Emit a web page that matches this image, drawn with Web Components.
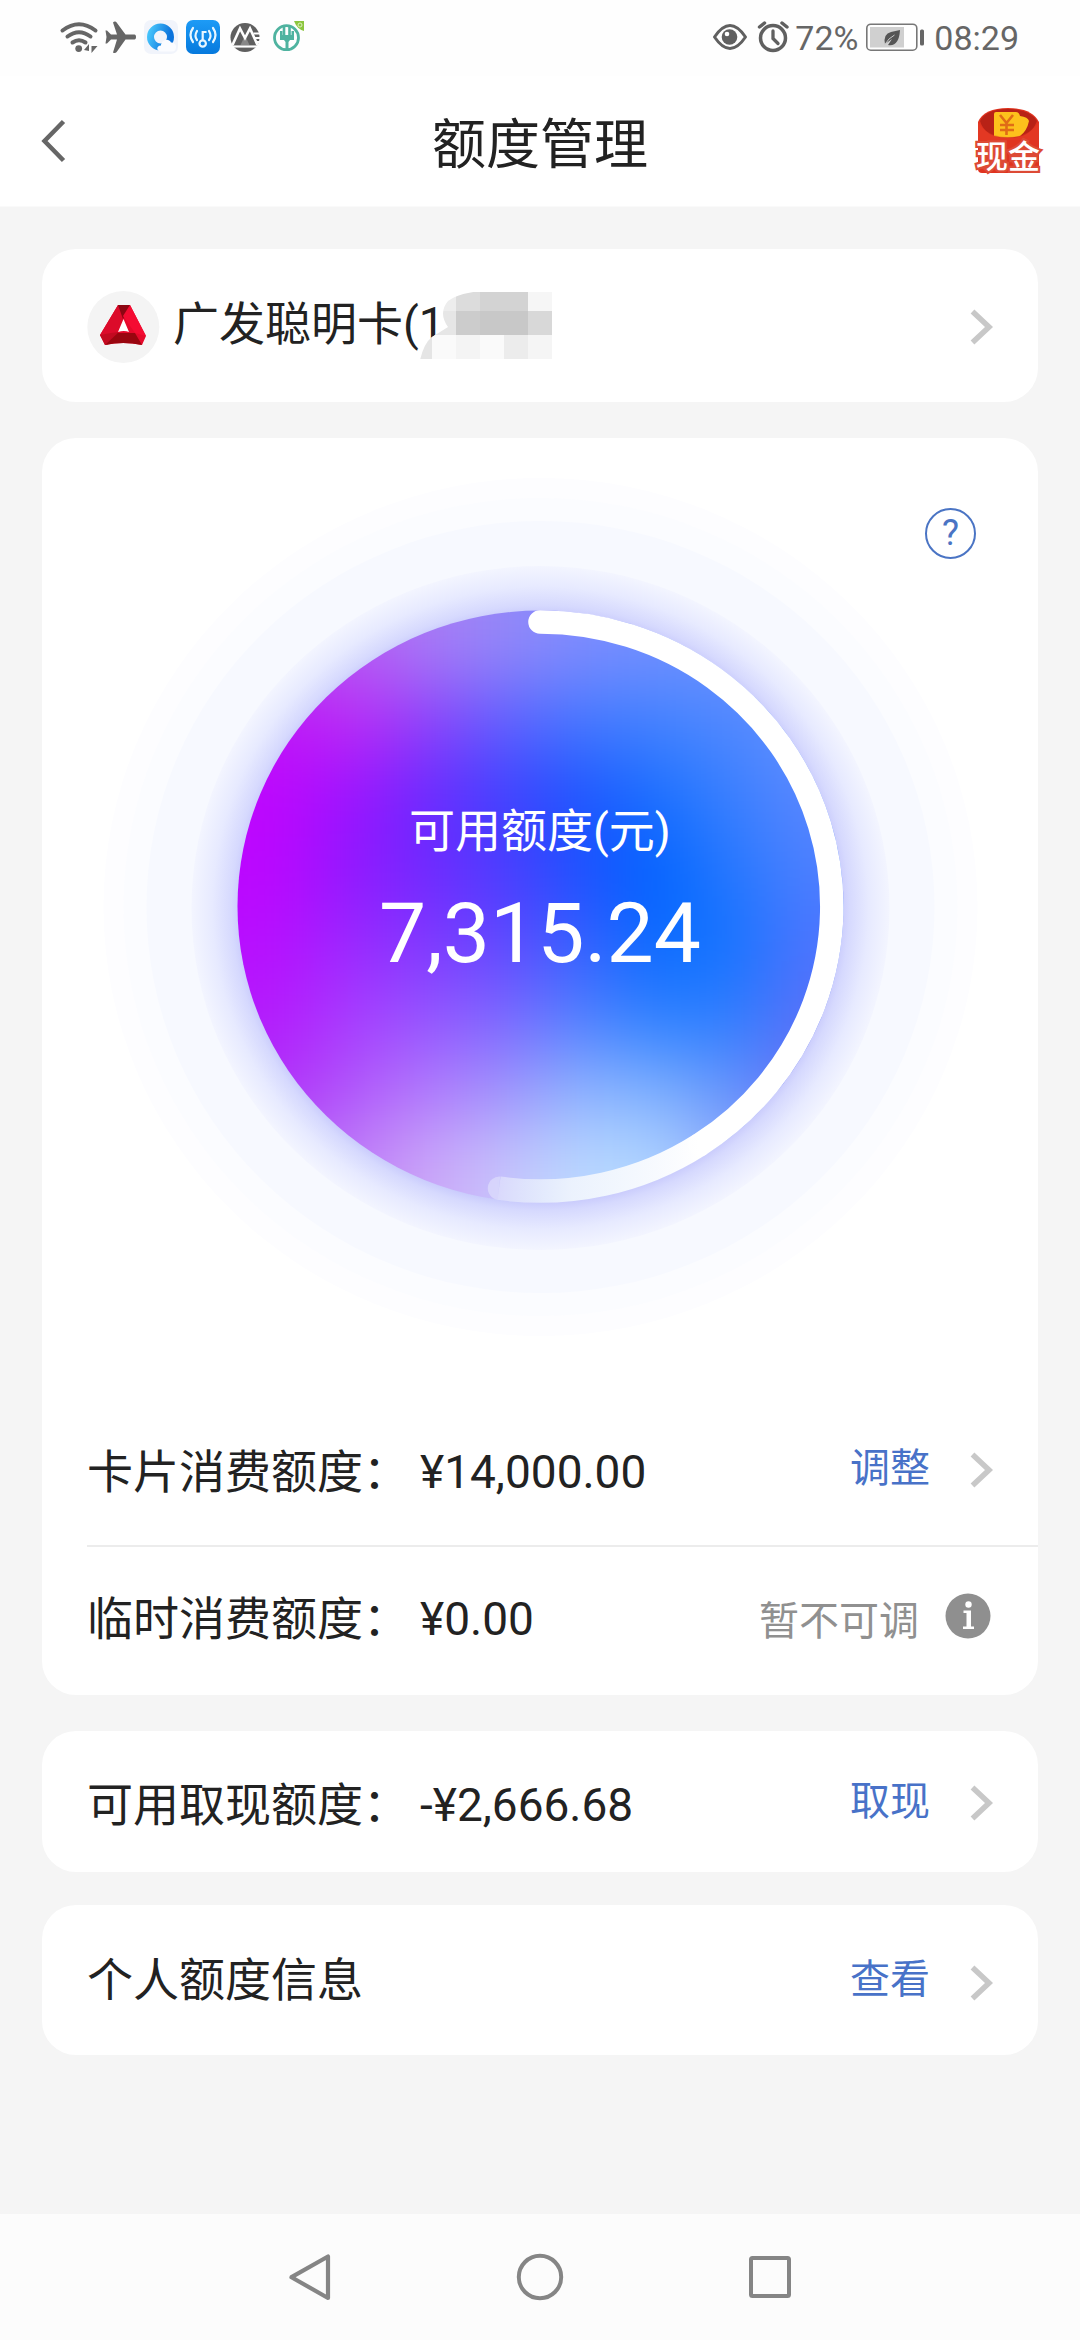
<!DOCTYPE html>
<html lang="zh-CN">
<head>
<meta charset="utf-8">
<title>额度管理</title>
<style>
  html, body { margin: 0; padding: 0; background: #f5f5f5; }
  body { width: 1080px; height: 2340px; overflow: hidden; font-family: Roboto, "Noto Sans CJK SC", sans-serif; color: #222; }
</style>
</head>
<body>
<quota-app></quota-app>
<script>
const define = (name, html) => customElements.define(name, class extends HTMLElement {
  constructor() {
    super();
    const t = document.createElement('template');
    t.innerHTML = html;
    this.attachShadow({ mode: 'open' }).append(t.content.cloneNode(true));
  }
});

define('status-bar', `
<style>
  :host { display: flex; justify-content: space-between; align-items: flex-start; height: 76px; background: #fefefe; color: #666; font-size: 34px; line-height: 76px; }
  svg { display: block; }
  .right { display: flex; padding-right: 61px; }
  .pct { width: 71px; padding-left: 4px; }
  .time { padding-left: 8px; }
</style>
<svg width="320" height="76" viewBox="0 0 320 76">
  <g fill="none" stroke="#666" stroke-width="4" stroke-linecap="round">
    <path d="M62.500 30.500Q79 18 95.500 30.500"/><path d="M67.500 36.500Q79 28 90.500 36.500"/><path d="M72.500 42.500Q79 38 85.500 42.500"/>
  </g>
  <circle cx="78.700" cy="48.600" r="3.400" fill="#666"/>
  <path d="M84 50l5-6v7zM91.500 46v7l6-7z" fill="#666"/>
  <path d="M113 22.500c1.500-1.500 3-1 4 .5l8.500 11.500h9c2 0 2 5 0 5h-9L117 51.500c-1 1.500-2.500 2-4 1L117 39.500h-6l-4 4h-1.500l1-6.500-1-6.500h1.500l4 4h6z" fill="#666"/>
  <defs>
    <linearGradient id="q" x1="0" y1="0" x2="1" y2="0.300"><stop offset="0" stop-color="#45c3fb"/><stop offset="1" stop-color="#0c74dc"/></linearGradient>
    <linearGradient id="b" x1="0" y1="0" x2="0" y2="1"><stop offset="0" stop-color="#1d9bf6"/><stop offset="1" stop-color="#0679dd"/></linearGradient>
  </defs>
  <rect x="144" y="20" width="34" height="34" rx="7" fill="#f1f4fb"/>
  <circle cx="160.500" cy="37" r="10" fill="none" stroke="url(#q)" stroke-width="7"/>
  <path d="M161 51.500c-5 0-5-6 0-6 0-6 8-8 10-3 6-1 7 9 1 9z" fill="#fbfcff"/>
  <rect x="186" y="20" width="34" height="34" rx="7" fill="url(#b)"/>
  <g fill="none" stroke="#e8f6ff" stroke-width="2.200" stroke-linecap="round">
    <circle cx="202.700" cy="43.500" r="3.200"/><path d="M202.700 40V32h3"/>
    <path d="M197 31q-3 5 0 9M193 28q-5 7 0 14M209 31q3 5 0 9M213 28q5 7 0 14"/>
  </g>
  <circle cx="245" cy="37.500" r="14.500" fill="#5f5f5f"/>
  <path d="M232.500 45L240 28.500 245 38 250 28.500 257.500 45" fill="none" stroke="#fefefe" stroke-width="2.600" stroke-linejoin="miter"/>
  <path d="M245 35.500L249.500 45h-9z" fill="#fefefe" opacity=".25"/>
  <path d="M232 46.500h28" stroke="#fefefe" stroke-width="2.200"/>
  <path d="M253.500 33.500h7M255 38h6M257 42h4" stroke="#fefefe" stroke-width="1.800"/>
  <circle cx="286.500" cy="37.700" r="12" fill="none" stroke="#4fb3a0" stroke-width="2.800"/>
  <path d="M284 25v10M289.500 25v10" stroke="#4fb3a0" stroke-width="2.600"/>
  <path d="M280 31v9h4l1.500 2v8h3v-8l1.500-2h4v-9h-2.500v4h-9v-4z" fill="#4fb3a0"/>
  <path d="M294 21h10v10q-7-2-10-10z" fill="#8cc63f"/><circle cx="300" cy="25" r="2" fill="none" stroke="#dff0bd"/>
</svg>
<div class="right">
  <svg width="80" height="76" viewBox="712 0 80 76">
    <path d="M715.500 37Q731 14 746.500 37Q731 60 715.500 37z" fill="none" stroke="#606060" stroke-width="3" stroke-linejoin="round"/>
    <circle cx="730.500" cy="37" r="7.800" fill="#606060"/><circle cx="728" cy="34" r="2.300" fill="#fff"/>
    <circle cx="774" cy="38" r="12.500" fill="none" stroke="#606060" stroke-width="3.500"/>
    <path d="M774 31v7.500l5 5" fill="none" stroke="#606060" stroke-width="3.300" stroke-linecap="round"/>
    <path d="M760.500 27l5-4M788 27l-5-4" stroke="#606060" stroke-width="3.500" stroke-linecap="round"/>
  </svg>
  <span class="pct">72%</span>
  <svg width="60" height="76" viewBox="867 0 60 76">
    <rect x="867.800" y="24.200" width="50" height="26" rx="4" fill="#fff" stroke="#777" stroke-width="1.600"/>
    <rect x="871" y="27" width="34" height="20.500" fill="#d0d0d0"/>
    <path d="M886 44q-2-10 6-12l9-2q-1 17-12 15l4-6z" fill="#555"/>
    <path d="M885.500 45q4-7 10-10" stroke="#c8c8c8" stroke-width="1" fill="none"/>
    <rect x="921" y="29.500" width="4" height="16" rx="1.500" fill="#666"/>
  </svg>
  <span class="time">08:29</span>
</div>`);

define('title-bar', `
<style>
  :host { display: grid; grid-template-columns: 200px 1fr 200px; height: 130px; background: #fff; border-bottom: 1px solid #fafafa; }
  .title { font-size: 54px; line-height: 139px; height: 130px; text-align: center; white-space: nowrap; }
  svg { display: block; }
  .cash { justify-self: end; }
</style>
<svg width="80" height="130" viewBox="0 76 80 130"><path d="M63.500 121.500L44.500 141 63.500 160.500" fill="none" stroke="#666" stroke-width="4.500"/></svg>
<div class="title"><slot></slot></div>
<svg class="cash" width="120" height="130" viewBox="960 76 120 130">
  <path d="M978 122q6-14 30-14t31 14v47q0 4-4 4h-53q-4 0-4-4z" fill="#e0331f"/>
  <path d="M980 121q6-12 28-12t29 12q-6 17-29 17t-28-17z" fill="#b82216"/>
  <path d="M994 114q0-2 2-2h20q3 0 4 4 8 1 9 5-2 10-9 15-12 3-26 0z" fill="#fdc11c"/>
  <path d="M1000 115l6.500 8 6.500-8M1000 125h14M1000 130h14M1006.500 123v12" fill="none" stroke="#e06c16" stroke-width="2.600"/>
  <path d="M978 122q9 15 30 15t31-15v18h-61z" fill="#e8412b" opacity=".35"/>
  <text x="1008" y="168" text-anchor="middle" font-family="Noto Sans CJK SC" font-weight="500" font-size="32" fill="#fff" stroke="#dd4a35" stroke-width="4.500" paint-order="stroke">现金</text>
</svg>`);

define('chevron-right', `
<style>:host { display: block; width: 24px; height: 36px; } svg { display: block; }</style>
<svg width="24" height="36" viewBox="0 0 24 36"><path d="M2.500 2.500L19 18 2.500 33.500" fill="none" stroke="#c8c8c8" stroke-width="5.500"/></svg>`);

define('panel-card', `
<style>:host { display: block; background: #fff; border-radius: 34px; overflow: hidden; }</style>
<slot></slot>`);

define('card-picker', `
<style>
  :host { display: flex; align-items: center; height: 153px; padding: 0 44px 0 45px; font-size: 46px; line-height: 60px; }
  svg { display: block; flex: none; }
  .logo { margin: 3px 13px 0 0; }
  .name { width: 243px; margin-top: -3px; white-space: nowrap; }
  .veil { position: relative; margin-top: 3px; }
  chevron-right { margin: 3px 0 0 auto; }
</style>
<svg class="logo" width="73" height="72" viewBox="87 291 73 72">
  <circle cx="123.300" cy="327" r="36" fill="#f4f4f4"/>
  <path d="M118 305h12l16 31-4 9q-19-4-37 0l-5-10z" fill="#e5092b"/>
  <path d="M118 305h12l-1 4-5 10-7 13-10 13-7-10z" fill="#dc0b2a"/>
  <path d="M118 305h12l-7 14z" fill="#8c0612"/>
  <path d="M111 333h24l7 12q-19-4-37 0z" fill="#99060f"/>
  <path d="M100 335l11-2 8-1-14 13z" fill="#c30a20"/>
  <path d="M130 305l16 31-11-3-12-17z" fill="#f40b32"/>
  <path d="M123.500 319l5.500 13q-5-2-11 0z" fill="#fff"/>
</svg>
<span class="name"><slot></slot></span>
<svg class="veil" width="240" height="110" viewBox="416 273 240 110">
  <defs><clipPath id="v"><path d="M420 361Q424 344 432 338L448 328Q438 314 448 302Q460 293 485 292H556V361z"/></clipPath></defs>
  <path d="M420 361Q424 344 432 338L448 328Q438 314 448 302Q460 293 485 292H600V380H470z" fill="#fff"/>
  <g clip-path="url(#v)" shape-rendering="crispEdges">
    <path fill="#ededed" d="M432 293h24v19h-24z"/><path fill="#dcdcdc" d="M456 293h24v19h-24z"/><path fill="#d3d3d3" d="M480 293h48v19h-48z"/><path fill="#f6f6f6" d="M528 293h24v19h-24z"/>
    <path fill="#e6e6e6" d="M432 312h24v24h-24z"/><path fill="#cccccc" d="M456 312h24v24h-24z"/><path fill="#c8c8c8" d="M480 312h48v24h-48z"/><path fill="#d8d8d8" d="M528 312h24v24h-24z"/>
    <path fill="#e5e5e5" d="M418 336h14v24h-14z"/><path fill="#fafafa" d="M432 336h24v24h-24z"/><path fill="#f4f4f4" d="M456 336h24v24h-24z"/><path fill="#fafafa" d="M480 336h24v24h-24z"/><path fill="#ececec" d="M504 336h24v24h-24z"/><path fill="#f5f5f5" d="M528 336h24v24h-24z"/>
  </g>
</svg>
<chevron-right></chevron-right>`);

// Colour field of the gauge disc on an 8 by 8 grid, from top left to bottom right.
const FIELD = [
  'a850f2 b85cf4 a87cf6 9488f8 7f8cff 7290ff 6a90ff 6a90ff',
  'c014f8 be2af4 9040fa 6060ff 4478ff 4282ff 5088ff 6090ff',
  'be06fe 9c12ff 6a2aff 4040ff 1c55ff 1a70ff 3a80ff 5a86ff',
  'bc06ff 9018ff 7028ff 4c3cff 1c50ff 0064ff 2678ff 4c80ff',
  'b80eff 9a28ff 8038ff 6048ff 3660ff 086aff 1474ff 4c74ff',
  'b41afc a83cff 9454ff 7c66ff 5080ff 2c80ff 2c7cff 5a70f8',
  'b030f8 b056fa b27afc a094fc 8eb4ff 80b0ff 6494fc 6a70f5',
  'b864f8 c080f8 cca8f8 c8c4fc bcdaff b4d8ff 94acfc 7c80f5'
];
const CW = 76, CH = 74, X0 = 237, Y0 = 610;
const cells = FIELD.map((row, r) => row.split(' ').map((c, k) => {
  const l = k === 0 ? 150 : 0, t = r === 0 ? 150 : 0;
  const w = CW + 1 + l + (k === 7 ? 150 : 0), h = CH + 1 + t + (r === 7 ? 150 : 0);
  return `<rect x="${X0 + k * CW - l}" y="${Y0 + r * CH - t}" width="${w}" height="${h}" fill="#${c}"/>`;
}).join('')).join('');

define('quota-gauge', `
<style>
  :host { display: grid; height: 960px; position: relative; }
  svg, .text { grid-area: 1 / 1; display: block; }
  .text { padding-top: 361px; text-align: center; color: #fff; position: relative; }
  .label { font-size: 46px; line-height: 64px; }
  .amount { font-size: 84px; line-height: 100px; margin-top: 21px; }
  .help { position: absolute; left: 883px; top: 70px; box-sizing: border-box; width: 51px; height: 51px; border: 2.500px solid #4a74c4; border-radius: 50%; color: #4a74c4; font-size: 36px; line-height: 46px; text-align: center; }
</style>
<svg width="996" height="960" viewBox="42 438 996 960">
  <defs>
    <clipPath id="disc"><ellipse cx="540.500" cy="906.500" rx="303" ry="296"/></clipPath>
    <filter id="soft" x="0" y="400" width="1080" height="1000" filterUnits="userSpaceOnUse" color-interpolation-filters="sRGB"><feGaussianBlur stdDeviation="36"/></filter>
    <radialGradient id="halo">
      <stop offset="0.840" stop-color="#bfc0fb"/><stop offset="0.885" stop-color="#d6d9fe"/><stop offset="0.940" stop-color="#e7eaff"/><stop offset="1" stop-color="#f3f5ff"/>
    </radialGradient>
    <linearGradient id="fade" gradientUnits="userSpaceOnUse" x1="486" y1="0" x2="700" y2="0">
      <stop offset="0" stop-color="#eef2fc" stop-opacity=".42"/><stop offset=".14" stop-color="#eef2fc" stop-opacity=".6"/><stop offset=".4" stop-color="#f2f6fd" stop-opacity=".88"/><stop offset="1" stop-color="#fff"/>
    </linearGradient>
  </defs>
  <ellipse cx="540.500" cy="907" rx="437" ry="429" fill="#fdfdff"/>
  <ellipse cx="540.500" cy="907" rx="417" ry="409" fill="#fbfcff"/>
  <ellipse cx="540.500" cy="907" rx="394" ry="386" fill="#f7f9ff"/>
  <ellipse cx="540.500" cy="908" rx="349" ry="342" fill="url(#halo)"/>
  <g clip-path="url(#disc)"><g filter="url(#soft)">${cells}</g></g>
  <g fill="none" stroke-width="23.500">
    <path d="M540 622A291.500 284.500 0 0 1 700 1144.500" stroke="#fff" stroke-linecap="round"/>
    <path d="M700 1144.500A291.500 284.500 0 0 1 499 1188.200" stroke="url(#fade)"/>
  </g>
  <path d="M500.300 1176.500A11.750 11.750 0 0 0 497.500 1199.800z" fill="#eef2fc" fill-opacity=".42"/>
</svg>
<div class="text"><div class="label"><slot></slot></div><div class="amount"><slot name="amount"></slot></div></div>
<div class="help">?</div>`);

define('quota-row', `
<style>
  :host { display: flex; align-items: center; height: var(--h, 148px); padding-left: 45px; padding-right: 44px; font-size: 46px; line-height: 60px; white-space: nowrap; }
  .label { min-width: 333px; transform: translateY(var(--dy, 0)); }
  .value { transform: translateY(var(--dy, 0)); }
  .action { margin-left: auto; font-size: 40px; color: #4872c8; display: flex; align-items: center; }
</style>
<span class="label"><slot></slot></span><span class="value"><slot name="value"></slot></span>
<span class="action"><slot name="action"></slot></span>
<slot name="end"></slot>`);

define('info-dot', `
<style>:host { display: block; } svg { display: block; }</style>
<svg width="46" height="46" viewBox="0 0 46 46"><circle cx="23" cy="23" r="22.500" fill="#8f8f8f"/><circle cx="23.500" cy="11.500" r="3.200" fill="#fff"/><path d="M18.500 17.500h7.500v16h3v2.500h-11v-2.500h3.500V20h-3z" fill="#fff"/></svg>`);

define('nav-bar', `
<style>:host { display: flex; justify-content: space-between; align-items: center; height: 126px; padding: 0 287px; background: #fcfcfc; } svg { display: block; }</style>
<svg width="46" height="50" viewBox="286 2252 46 50"><path d="M327 2256.500v41.500L290.500 2277.200z" fill="none" stroke="#858585" stroke-width="4.200" stroke-linejoin="round"/></svg>
<svg width="50" height="50" viewBox="0 0 50 50"><circle cx="25" cy="25" r="21.200" fill="none" stroke="#858585" stroke-width="4"/></svg>
<svg width="46" height="50" viewBox="746 2252 46 50"><rect x="750" y="2258" width="38" height="38" rx="1.500" fill="none" stroke="#858585" stroke-width="4"/></svg>`);

define('quota-app', `
<style>
  :host { display: flex; flex-direction: column; height: 2340px; background: #f5f5f5; }
  main { flex: 1; padding: 42px 42px 0; display: flex; flex-direction: column; }
  .c2 { margin-top: 36px; } .c3 { margin-top: 36px; } .c4 { margin-top: 33px; }
  .line { height: 2px; margin-left: 45px; background: #ececec; }
  .r1 { --h: 147px; } .r2 { --h: 148px; --dy: -2px; } .r3 { --h: 141px; --dy: 3px; } .r4 { --h: 150px; }
  .act { padding-right: 40px; }
  .r1 .act { margin-top: -6px; } .r1 chevron-right { margin-top: -3px; }
  .r3 chevron-right { margin-top: 3px; } .r4 chevron-right { margin-top: 6px; }
  .r2 .act { color: #909090; padding-right: 26px; margin-top: 2px; }
  .r2 info-dot { margin: -11px 3px 0 0; }
</style>
<status-bar></status-bar>
<title-bar>额度管理</title-bar>
<main>
  <panel-card><card-picker>广发聪明卡(1</card-picker></panel-card>
  <panel-card class="c2">
    <quota-gauge>可用额度(元)<span slot="amount">7,315.24</span></quota-gauge>
    <quota-row class="r1">卡片消费额度：<span slot="value">¥14,000.00</span><span class="act" slot="action">调整</span><chevron-right slot="end"></chevron-right></quota-row>
    <div class="line"></div>
    <quota-row class="r2">临时消费额度：<span slot="value">¥0.00</span><span class="act" slot="action">暂不可调</span><info-dot slot="end"></info-dot></quota-row>
  </panel-card>
  <panel-card class="c3"><quota-row class="r3">可用取现额度：<span slot="value">-¥2,666.68</span><span class="act" slot="action">取现</span><chevron-right slot="end"></chevron-right></quota-row></panel-card>
  <panel-card class="c4"><quota-row class="r4">个人额度信息<span class="act" slot="action">查看</span><chevron-right slot="end"></chevron-right></quota-row></panel-card>
</main>
<nav-bar></nav-bar>`);
</script>
</body>
</html>
